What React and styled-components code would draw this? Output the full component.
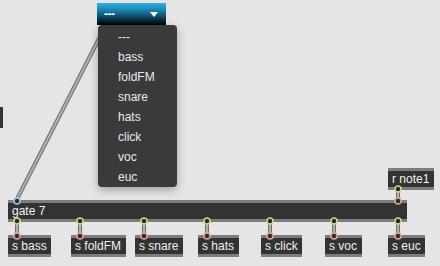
import { createGlobalStyle } from "styled-components";
import styled from "styled-components";

const GlobalStyle = createGlobalStyle`
  html, body {
    margin: 0;
    padding: 0;
    background: #e5e5e5;
    overflow: hidden;
  }
`;

const objects = [
  { id: "gate", text: "gate 7", x: 8, y: 200, w: 399, h: 22 },
  { id: "rnote", text: "r note1", x: 388, y: 168, w: 46, h: 22 },
  { id: "sbass", text: "s bass", x: 8, y: 235, w: 43, h: 22 },
  { id: "sfold", text: "s foldFM", x: 71, y: 235, w: 55, h: 22 },
  { id: "ssnare", text: "s snare", x: 135, y: 235, w: 48, h: 22 },
  { id: "shats", text: "s hats", x: 198, y: 235, w: 41, h: 22 },
  { id: "sclick", text: "s click", x: 261, y: 235, w: 41, h: 22 },
  { id: "svoc", text: "s voc", x: 325, y: 235, w: 37, h: 22 },
  { id: "seuc", text: "s euc", x: 388, y: 235, w: 37, h: 22 },
];

const outletXs = [17, 80, 144, 207, 270, 334, 398];

const menuItems = ["---", "bass", "foldFM", "snare", "hats", "click", "voc", "euc"];

export default function App() {
  return (
    <>
      <GlobalStyle />
      <Patcher>
        <SideTab />

        {objects.map((o) => (
          <ObjectBox key={o.id} $x={o.x} $y={o.y} $w={o.w} $h={o.h}>
            {o.text}
          </ObjectBox>
        ))}

        <Cords viewBox="0 0 440 266">
          <Cord x1={106} y1={25} x2={16} y2={201} />
          <Cord x1={398} y1={190} x2={398} y2={201} />
          {outletXs.map((x) => (
            <Cord key={x} x1={x} y1={221} x2={x} y2={236} />
          ))}

          <Port cx={17} cy={201} color="#8fd0e8" />
          <Port cx={398} cy={201} color="#e6a394" />
          <Port cx={398} cy={189} color="#d6d983" />
          {outletXs.map((x) => (
            <g key={x}>
              <Port cx={x} cy={221} color="#d6d983" />
              <Port cx={x} cy={236} color="#e6a394" />
            </g>
          ))}
        </Cords>

        <Umenu>
          <UmenuLabel>---</UmenuLabel>
          <Caret />
        </Umenu>

        <Popup>
          {menuItems.map((item) => (
            <PopupItem key={item}>{item}</PopupItem>
          ))}
        </Popup>
      </Patcher>
    </>
  );
}

function Cord({ x1, y1, x2, y2 }) {
  return (
    <g>
      <line x1={x1} y1={y1} x2={x2} y2={y2} stroke="#6e6e6e" strokeWidth="4" />
      <line x1={x1} y1={y1} x2={x2} y2={y2} stroke="#b0b0b0" strokeWidth="2" />
    </g>
  );
}

function Port({ cx, cy, color }) {
  return <circle cx={cx} cy={cy} r="3" fill="#2e2e2e" stroke={color} strokeWidth="1.5" />;
}

const Patcher = styled.div`
  position: relative;
  width: 440px;
  height: 266px;
  background: #e5e5e5;
  overflow: hidden;
  font-family: "Liberation Sans", Arial, sans-serif;
`;

const SideTab = styled.div`
  position: absolute;
  left: 0;
  top: 107px;
  width: 3px;
  height: 21px;
  background: #333;
`;

const ObjectBox = styled.div`
  position: absolute;
  left: ${(p) => p.$x}px;
  top: ${(p) => p.$y}px;
  width: ${(p) => p.$w}px;
  height: ${(p) => p.$h}px;
  box-sizing: border-box;
  background: #333333;
  border-top: 3px solid #7d7d7d;
  border-bottom: 3px solid #7d7d7d;
  color: #f2f2f2;
  font-size: 12px;
  line-height: 16px;
  padding: 0 0 0 4px;
  white-space: nowrap;
  overflow: hidden;
`;

const Cords = styled.svg`
  position: absolute;
  left: 0;
  top: 0;
  width: 440px;
  height: 266px;
  pointer-events: none;
`;

const Umenu = styled.div`
  position: absolute;
  left: 97px;
  top: 3px;
  width: 69px;
  height: 22px;
  box-sizing: border-box;
  background: linear-gradient(to bottom, #2bb3e6 0%, #1a7fa8 35%, #0b3a4e 70%, #000 100%);
  display: flex;
  align-items: center;
  justify-content: space-between;
  padding: 0 8px 0 7px;
  color: #fff;
  font-size: 12px;
  font-weight: bold;
`;

const UmenuLabel = styled.span`
  letter-spacing: -0.5px;
`;

const Caret = styled.span`
  width: 0;
  height: 0;
  border-left: 4px solid transparent;
  border-right: 4px solid transparent;
  border-top: 5px solid #fff;
`;

const Popup = styled.div`
  position: absolute;
  left: 98px;
  top: 25px;
  width: 79px;
  height: 162px;
  box-sizing: border-box;
  padding-top: 2px;
  background: #3a3a3a;
  border-radius: 4px;
  box-shadow: 0 3px 9px rgba(0, 0, 0, 0.3);
  display: flex;
  flex-direction: column;
`;

const PopupItem = styled.div`
  height: 20px;
  line-height: 20px;
  padding-left: 20px;
  color: #e8e8f0;
  font-size: 12px;
`;
